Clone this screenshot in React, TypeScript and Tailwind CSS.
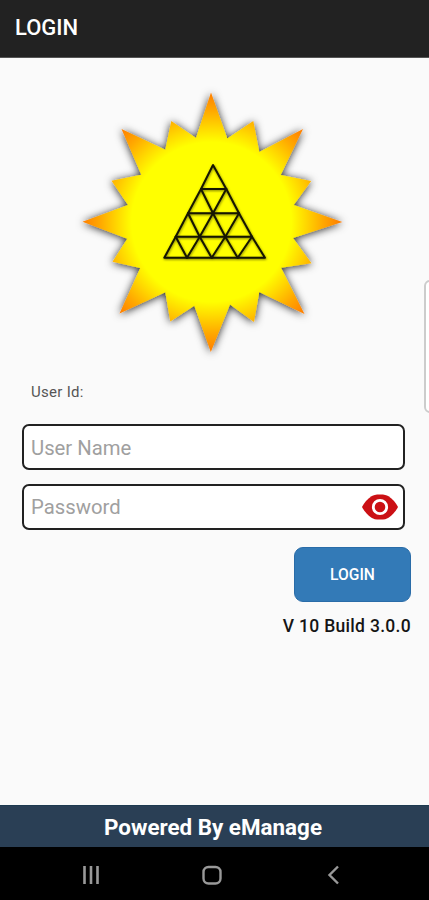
import { useState } from 'react';

// Outline of the sunburst, clockwise from the top ray
const SUN_POINTS =
  '211,92.5 227.3,138.5 253.3,121 259.3,152 303,129 280.7,175 311.2,181 293.7,205 342.3,222 ' +
  '293,238 311.5,263.3 281,267.7 304.5,314 259.3,292 254,322 230,304.5 210.8,352 194.3,305.7 ' +
  '170.3,321.5 165.3,292.3 119.5,313.5 140.3,268 112.5,261.7 127.3,238.7 82.5,221.7 128,205 ' +
  '111.5,180.7 141.3,174.7 121.5,129 165.3,149.7 171.3,121 196,138';

function SunLogo() {
  return (
    <svg className="block w-[280px] h-[280px]" viewBox="71 82 280 280" fill="none">
      <defs>
        <radialGradient id="sun" gradientUnits="userSpaceOnUse" cx="211.5" cy="222" r="131">
          <stop offset="0" stopColor="#ffff00" />
          <stop offset="0.61" stopColor="#ffff00" />
          <stop offset="0.72" stopColor="#ffd800" />
          <stop offset="0.85" stopColor="#ffa800" />
          <stop offset="1" stopColor="#ff7a00" />
        </radialGradient>
        <filter id="sunShadow" x="-10%" y="-10%" width="120%" height="120%">
          <feDropShadow dx="0" dy="1" stdDeviation="4" floodColor="#000" floodOpacity="0.85" />
        </filter>
        <filter id="lineShadow" x="-10%" y="-10%" width="120%" height="120%">
          <feDropShadow dx="0.5" dy="1" stdDeviation="1" floodColor="#000" floodOpacity="0.5" />
        </filter>
      </defs>
      <polygon points={SUN_POINTS} fill="url(#sun)" filter="url(#sunShadow)" />
      <g stroke="#151500" strokeWidth="2" strokeLinejoin="round" strokeLinecap="round" filter="url(#lineShadow)">
        <path d="M213 165L201 189L188 213.3L175.7 236.7L164.3 257.7H265L252 236.7L239 213.3L226.3 189Z" />
        <path d="M201 189H226.3M188 213.3H239M175.7 236.7H252" />
        <path d="M201 189L213 213.3L225.3 236.7L237.7 257.7M188 213.3L199.7 236.7L211.7 257.7M175.7 236.7L187 257.7" />
        <path d="M226.3 189L213 213.3L199.7 236.7L187 257.7M239 213.3L225.3 236.7L211.7 257.7M252 236.7L237.7 257.7" />
      </g>
    </svg>
  );
}

function EyeIcon() {
  return (
    <svg className="block w-[38px] h-[26px]" viewBox="0 0 38 26">
      <path
        d="M1 13C3 9 6.500 5 10.500 2.300C12.500 1 14.500 .5 19 .5C23.500 .5 25.500 1 27.500 2.300C31.500 5 35 9 37 13C35 17 31.500 21 27.500 23.700C25.500 25 23.500 25.500 19 25.500C14.500 25.500 12.500 25 10.500 23.700C6.500 21 3 17 1 13Z"
        fill="#cb1014"
      />
      <circle cx="19" cy="13" r="6.700" fill="#cb1014" stroke="#fff" strokeWidth="2.800" />
    </svg>
  );
}

export default function App() {
  const [userName, setUserName] = useState('');
  const [password, setPassword] = useState('');
  const [showPassword, setShowPassword] = useState(false);

  return (
    <div className="relative flex h-[900px] w-[429px] flex-col overflow-hidden bg-[#fafafa] font-[Roboto,sans-serif]">
      <header className="flex h-[58px] shrink-0 items-center border-b border-[#555] bg-[#222] pl-[15px] pb-px">
        <h1 className="text-[22px] font-medium leading-none text-white">LOGIN</h1>
      </header>

      <main className="flex flex-1 flex-col pt-6">
        <div className="pl-[71px]">
          <SunLogo />
        </div>

        <form className="flex flex-col pl-[22px]" onSubmit={(e) => e.preventDefault()}>
          <label htmlFor="user" className="mt-5 ml-[9px] text-[15px] leading-5 tracking-[0.3px] text-[#555]">
            User Id:
          </label>
          <input
            id="user"
            value={userName}
            onChange={(e) => setUserName(e.target.value)}
            placeholder="User Name"
            className="mt-[22px] h-[46px] w-[383px] rounded-[7px] border-2 border-[#222] bg-white px-[7px] pt-[2px] text-[20.3px] placeholder:text-[#a0a0a0] outline-none"
          />
          <div className="mt-[14px] flex h-[46px] w-[383px] items-center rounded-[7px] border-2 border-[#222] bg-white pl-[7px] pr-1">
            <input
              type={showPassword ? 'text' : 'password'}
              value={password}
              onChange={(e) => setPassword(e.target.value)}
              placeholder="Password"
              className="min-w-0 flex-1 text-[20.3px] placeholder:text-[#a0a0a0] outline-none"
            />
            <button type="button" aria-label="Show password" className="pb-px" onClick={() => setShowPassword(!showPassword)}>
              <EyeIcon />
            </button>
          </div>

          <div className="mt-[17px] flex flex-col items-end pr-[18px]">
            <button className="h-[55px] w-[117px] rounded-[9px] border border-[#2a6ca8] bg-[#337ab7] pt-[3px] text-[15.6px] font-medium text-white">
              LOGIN
            </button>
            <p className="mt-[13px] text-[17.5px] font-medium leading-[22px] tracking-[0.3px] text-[#151515]">
              V 10 Build 3.0.0
            </p>
          </div>
        </form>
      </main>

      <footer className="flex h-[42px] shrink-0 items-center justify-center border-t border-[#1d3a50] bg-[#2a3f55] pt-px pr-[3px]">
        <span className="text-[22.4px] font-bold leading-none text-white">Powered By eManage</span>
      </footer>

      {/* System navigation bar */}
      <nav className="flex h-[53px] shrink-0 items-center bg-black">
        <svg className="block" width="429" height="53" viewBox="0 0 429 53" fill="none" stroke="#999">
          <path d="M84.500 19V37M91 19V37M97.500 19V37" strokeWidth="2.600" />
          <rect x="203.500" y="20" width="17" height="16.500" rx="5" strokeWidth="2.400" />
          <path d="M338 19.500L329.500 28L338 36.500" strokeWidth="2.400" />
        </svg>
      </nav>

      {/* Edge panel handle */}
      <div className="absolute top-[280px] left-[424px] h-[133px] w-3 rounded-l-[6px] border-2 border-[#ccc] bg-white" />
    </div>
  );
}
